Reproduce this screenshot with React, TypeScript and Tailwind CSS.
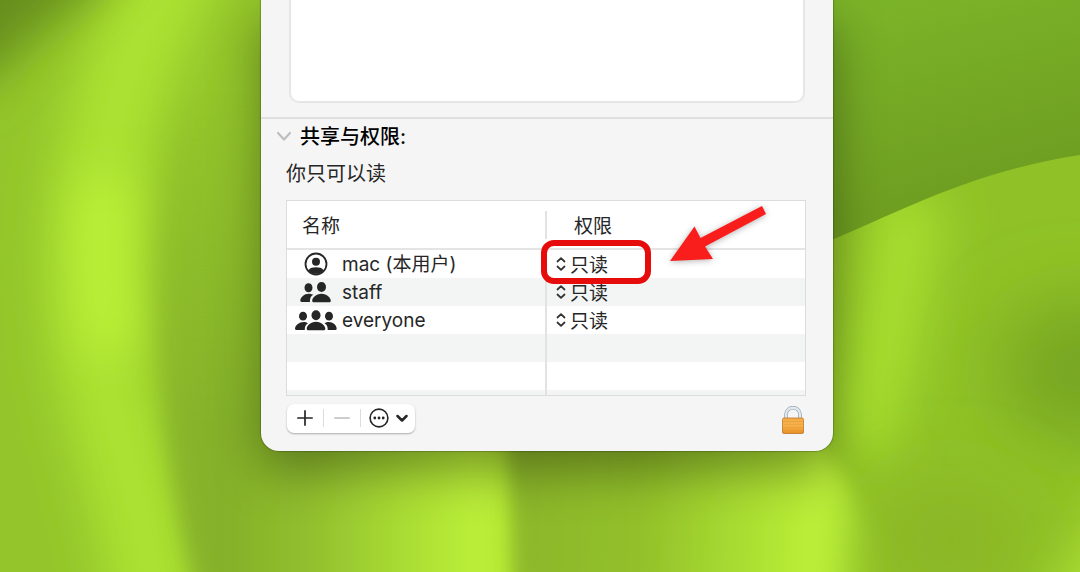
import { useState } from "react"

const users = [
    { name: "mac (本用户)", kind: "me" },
    { name: "staff", kind: "group" },
    { name: "everyone", kind: "all" },
]

function Wallpaper() {
    return (
        <svg className="absolute inset-0 -z-10 h-full w-full" viewBox="0 0 1080 572" preserveAspectRatio="none" aria-hidden="true">
            <defs>
                <linearGradient id="fold" gradientUnits="userSpaceOnUse" x1="150" y1="0" x2="515" y2="0">
                    <stop offset="0" stopColor="#8bb82b" />
                    <stop offset="0.2" stopColor="#84b02a" />
                    <stop offset="0.45" stopColor="#92c02e" />
                    <stop offset="0.7" stopColor="#aadd34" />
                    <stop offset="0.88" stopColor="#baee38" />
                    <stop offset="1" stopColor="#b4e835" />
                </linearGradient>
                <linearGradient id="fold2" gradientUnits="userSpaceOnUse" x1="510" y1="505" x2="890" y2="530">
                    <stop offset="0" stopColor="#8cb62b" />
                    <stop offset="0.35" stopColor="#92c02b" />
                    <stop offset="0.6" stopColor="#a8dc31" />
                    <stop offset="0.8" stopColor="#bbef38" />
                    <stop offset="0.86" stopColor="#b4e836" />
                    <stop offset="0.99" stopColor="#98c92b" stopOpacity="0" />
                </linearGradient>
                <linearGradient id="fade" x1="0" y1="0" x2="0" y2="1">
                    <stop offset="0.15" stopColor="#fff" stopOpacity="0" />
                    <stop offset="0.7" stopColor="#fff" />
                </linearGradient>
                <mask id="foldMask" maskUnits="userSpaceOnUse" x="0" y="0" width="1080" height="600">
                    <rect width="1080" height="600" fill="url(#fade)" />
                </mask>
                <linearGradient id="sky" gradientUnits="userSpaceOnUse" x1="900" y1="0" x2="950" y2="190">
                    <stop offset="0" stopColor="#7bb328" />
                    <stop offset="1" stopColor="#6f9f21" />
                </linearGradient>
                <clipPath id="hillClip">
                    <path d="M800 252C812 248 822 244 834 239C900 212 970 172 1080 155V572H800Z" />
                </clipPath>
                <filter id="blur5" filterUnits="userSpaceOnUse" x="-200" y="-200" width="1480" height="972"><feGaussianBlur stdDeviation="5" /></filter>
                <filter id="blur10" filterUnits="userSpaceOnUse" x="-200" y="-200" width="1480" height="972"><feGaussianBlur stdDeviation="10" /></filter>
                <filter id="blur24" filterUnits="userSpaceOnUse" x="-200" y="-200" width="1480" height="972"><feGaussianBlur stdDeviation="24" /></filter>
                <filter id="blur36" filterUnits="userSpaceOnUse" x="-200" y="-200" width="1480" height="972"><feGaussianBlur stdDeviation="36" /></filter>
            </defs>
            <rect width="1080" height="572" fill="#94c62b" />
            <path d="M190 -60C80 120 80 300 115 420C130 480 150 540 160 640" fill="none" stroke="#ace233" strokeWidth="90" filter="url(#blur24)" />
            <path d="M108 180C102 240 102 290 114 350" fill="none" stroke="#bdf238" strokeWidth="50" filter="url(#blur24)" />
            <path d="M-80 -80H150C110 -10 50 10 -20 90H-80Z" fill="#668f1d" filter="url(#blur24)" />
            <g mask="url(#foldMask)">
                <path d="M190 60C146 200 148 420 200 600H515V0H200Z" fill="url(#fold)" filter="url(#blur10)" />
            </g>
            <rect x="800" width="280" height="260" fill="url(#sky)" />
            <g clipPath="url(#hillClip)">
                <rect x="800" y="140" width="280" height="440" fill="#90c227" />
                <path d="M915 195C895 260 895 340 850 450" fill="none" stroke="#a6de2e" strokeWidth="70" filter="url(#blur24)" />
                <ellipse cx="1080" cy="370" rx="80" ry="70" fill="#77a521" filter="url(#blur36)" />
                <ellipse cx="950" cy="540" rx="80" ry="60" fill="#8ab627" filter="url(#blur36)" />
                <path d="M1150 430C1120 490 1080 540 1030 640H1150Z" fill="#aee034" filter="url(#blur24)" />
            </g>
            <path d="M500 380C512 450 516 520 520 620H900C880 540 850 470 800 420L780 380Z" fill="url(#fold2)" filter="url(#blur10)" />
        </svg>
    )
}

function UserIcon({ kind }: { kind: string }) {
    if (kind === "me") {
        return (
            <svg className="h-6 w-6" viewBox="0 0 24 24" fill="#262626" aria-hidden="true">
                <circle cx="12" cy="12" r="10.5" fill="none" stroke="#262626" strokeWidth="1.8" />
                <circle cx="12" cy="9.7" r="4" />
                <path d="M4.3 18.4C6 15.8 9 15.2 12 15.2s6 .6 7.7 3.2A10.5 10.5 0 0 1 4.3 18.4Z" />
            </svg>
        )
    }
    if (kind === "group") {
        return (
            <svg className="h-6 w-8" viewBox="0 0 32 24" fill="#262626" aria-hidden="true">
                <ellipse cx="8.5" cy="7.8" rx="4" ry="4.5" />
                <path d="M11.5 14.2C6 12.3 .5 16.5 .3 20.5Q.3 22 1.8 22H10C9.8 19 10.5 16 13.5 14.8Z" />
                <ellipse cx="21.5" cy="7" rx="4.5" ry="5" />
                <path d="M21.5 13.7c5.5 0 9.3 4 9.3 7 0 1-.8 1.6-1.8 1.6h-15c-1 0-1.8-.6-1.8-1.6 0-3 3.8-7 9.3-7Z" />
            </svg>
        )
    }
    return (
        <svg className="h-6 w-11" viewBox="0 0 44 24" fill="#262626" aria-hidden="true">
            <ellipse cx="9" cy="8.2" rx="4" ry="4.4" />
            <path d="M12.5 14.5C7 12.7 1.5 16.5 1 20.5Q1 22 2.5 22H10.8C10.6 19 11.5 16.5 14 15.2Z" />
            <ellipse cx="35" cy="8.2" rx="4" ry="4.4" />
            <path d="M32 14.5c5.5-1.8 10.5 2 10.7 6q0 1.5-1.5 1.5h-7.5c.2-3-.7-5.5-3.2-6.8Z" />
            <ellipse cx="22" cy="7.2" rx="4.5" ry="5" />
            <path d="M22 13.7c5.5 0 9.3 4 9.3 7 0 1-.8 1.6-1.8 1.6h-15c-1 0-1.8-.6-1.8-1.6 0-3 3.8-7 9.3-7Z" />
        </svg>
    )
}

function LockIcon() {
    return (
        <svg className="h-7 w-6" viewBox="0 0 24 28" aria-hidden="true">
            <defs>
                <linearGradient id="brass" x1="0" y1="0" x2="0" y2="1">
                    <stop offset="0" stopColor="#f3ac48" />
                    <stop offset="0.5" stopColor="#f8b04b" />
                    <stop offset="1" stopColor="#e98e22" />
                </linearGradient>
            </defs>
            <path d="M5 13V8.5a7 6.8 0 0 1 14 0V13" fill="none" stroke="#8f9ca8" strokeWidth="3.6" />
            <path d="M5 13V8.5a7 6.8 0 0 1 14 0V13" fill="none" stroke="#dfe8ef" strokeWidth="2.4" />
            <rect x="1.5" y="12" width="21" height="15.5" rx="1.5" fill="url(#brass)" stroke="#bd7628" strokeWidth="0.8" />
            <path d="M2.5 15.5h19M2.5 18.5h19M2.5 21.5h19M2.5 24.5h19" stroke="#e39a3a" strokeWidth="0.5" />
        </svg>
    )
}

function AccessSelect({ name }: { name: string }) {
    return (
        <div className="flex h-7 items-center gap-1 pl-[9px]">
            <svg className="h-4 w-[10px]" viewBox="0 0 10 16" fill="none" stroke="#333" strokeWidth="1.8" strokeLinecap="round" strokeLinejoin="round" aria-hidden="true">
                <path d="M1.5 5.5 5 2.2l3.5 3.3M1.5 10.5 5 13.8l3.5-3.3" />
            </svg>
            <select aria-label={`${name} 权限`} className="h-7 w-16 appearance-none bg-transparent pt-[2px] text-[19px] outline-none">
                <option>只读</option>
                <option>读与写</option>
            </select>
        </div>
    )
}

export default function App() {
    const [open, setOpen] = useState(true)

    return (
        <main className="relative isolate grid min-h-screen grid-cols-[261fr_minmax(0,572px)_247fr] items-start overflow-hidden font-[Inter,'Noto_Sans_CJK_SC',sans-serif] text-[19px] text-[#262626]">
            <Wallpaper />
            <section className="col-start-2 rounded-b-[18px] bg-[#f5f5f5] pb-[17px] shadow-[0_0_1px_1px_rgba(0,0,0,0.2),0_20px_50px_rgba(0,0,0,0.36)]">
                <div className="border-b-2 border-[#dfdfdf] px-7 pb-[14px]">
                    <textarea aria-label="注释" className="block h-[103px] w-full resize-none rounded-b-[10px] border-2 border-t-0 border-[#e6e6e6] bg-white p-2 outline-none" />
                </div>

                <button onClick={() => setOpen(!open)} aria-expanded={open} className="flex h-[34px] items-center gap-2 pl-[15px] text-[20px] font-medium text-black">
                    <svg className="h-4 w-4" viewBox="0 0 16 16" fill="none" stroke="#bdbdbd" strokeWidth="2.2" strokeLinecap="round" strokeLinejoin="round" aria-hidden="true">
                        <path d="m2 5 6 6.5L14 5" />
                    </svg>
                    <span className="pt-[2px]">共享与权限:</span>
                </button>

                {open && (
                    <div className="pr-[27px] pl-[25px]">
                        <p className="h-[47px] pt-[7px] text-[20px] leading-7">你只可以读</p>

                        <div className="relative border border-[#dcdcdc] bg-white">
                            <table className="w-full table-fixed border-collapse text-left">
                                <thead>
                                    <tr className="h-12 border-b-2 border-[#e4e4e4]">
                                        <th className="w-1/2 p-0 font-normal">
                                            <span className="flex h-7 items-center pt-[6px] pl-[15px]">名称</span>
                                        </th>
                                        <th className="w-1/2 p-0 font-normal">
                                            <span className="-ml-px flex h-7 items-center border-l-2 border-[#e2e2e2] pt-[6px] pl-[27px]">权限</span>
                                        </th>
                                    </tr>
                                </thead>
                                <tbody>
                                    {users.map((user) => (
                                        <tr key={user.name} className="h-7 even:bg-[#f3f5f5]">
                                            <td className="p-0">
                                                <div className="flex h-7 items-center gap-1 pl-[7px]">
                                                    <span className="flex w-11 shrink-0 justify-center"><UserIcon kind={user.kind} /></span>
                                                    <span className="pt-[2px]">{user.name}</span>
                                                </div>
                                            </td>
                                            <td className="border-l-2 border-[#e2e2e2] p-0"><AccessSelect name={user.name} /></td>
                                        </tr>
                                    ))}
                                    <tr className="h-7 bg-[#f3f5f5]"><td /><td className="border-l-2 border-[#e2e2e2]" /></tr>
                                    <tr className="h-7"><td /><td className="border-l-2 border-[#e2e2e2]" /></tr>
                                    <tr className="h-[5px] bg-[#f3f5f5]"><td className="p-0" /><td className="border-l-2 border-[#e2e2e2] p-0" /></tr>
                                </tbody>
                            </table>

                            {/* callout over the first access level */}
                            <div className="pointer-events-none absolute top-[39px] left-[254px] h-11 w-[110px] rounded-[13px] border-6 border-[#e60c0c]" />
                            <svg className="pointer-events-none absolute top-0 left-[379px] h-16 w-[110px] drop-shadow-[0_1px_3px_rgba(0,0,0,0.3)]" viewBox="0 0 110 64" aria-hidden="true">
                                <path d="M4 60 28.5 25.5 34.5 37 96 5 100 13 39 45.5 47 58Z" fill="#f91d1b" />
                            </svg>
                        </div>

                        <div className="mt-[6px] flex items-center justify-between">
                            <div className="ml-px flex h-[29px] items-center rounded-[7px] bg-white shadow-[0_1px_2px_rgba(0,0,0,0.3)]">
                                <button aria-label="添加" className="flex h-full w-9 items-center justify-center">
                                    <svg className="h-4 w-4" viewBox="0 0 16 16" stroke="#262626" strokeWidth="1.7" strokeLinecap="round"><path d="M.9 8h14.2M8 .9v14.2" /></svg>
                                </button>
                                <span className="h-[18px] w-px bg-[#dcdcdc]" />
                                <button aria-label="移除" className="flex h-full w-9 items-center justify-center">
                                    <svg className="h-4 w-4" viewBox="0 0 16 16" stroke="#bdbdbd" strokeWidth="1.7" strokeLinecap="round"><path d="M.9 8h14.2" /></svg>
                                </button>
                                <span className="h-[18px] w-px bg-[#dcdcdc]" />
                                <button aria-label="更多操作" className="flex h-full w-[54px] items-center gap-[7px] pl-2">
                                    <svg className="h-5 w-5" viewBox="0 0 20 20" fill="#262626">
                                        <circle cx="10" cy="10" r="8.9" fill="none" stroke="#262626" strokeWidth="1.6" />
                                        <circle cx="5.8" cy="10" r="1.4" /><circle cx="10" cy="10" r="1.4" /><circle cx="14.2" cy="10" r="1.4" />
                                    </svg>
                                    <svg className="h-2 w-3" viewBox="0 0 12 8" fill="none" stroke="#262626" strokeWidth="2.5" strokeLinecap="round" strokeLinejoin="round"><path d="m1.5 2 4.5 4.5L10.5 2" /></svg>
                                </button>
                            </div>
                            <button aria-label="锁定" className="mt-1 mr-px"><LockIcon /></button>
                        </div>
                    </div>
                )}
            </section>
        </main>
    )
}
